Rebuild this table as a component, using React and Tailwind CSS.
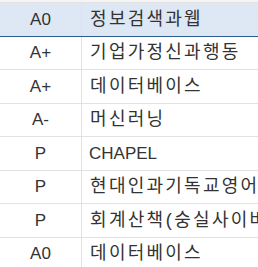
function Ko({ text }) {
  return (
    <span className="shrink-0 whitespace-nowrap">
      {Array.from(text).map((c, i) =>
        /[\uac00-\ud7a3]/.test(c) ? (
          <span key={i} className="inline-block w-[18.8px] text-center">{c}</span>
        ) : (
          <span key={i} className="inline-block w-[9px] text-center">{c}</span>
        )
      )}
    </span>
  );
}

export default function App() {
  const rows = [
    ["A0", "정보검색과웹", true],
    ["A+", "기업가정신과행동", true],
    ["A+", "데이터베이스", true],
    ["A-", "머신러닝", true],
    ["P", "CHAPEL", false],
    ["P", "현대인과기독교영어", true],
    ["P", "회계산책(숭실사이버대)", true],
    ["A0", "데이터베이스", true],
  ];
  return (
    <div className="w-[258px] h-[267px] overflow-hidden bg-white text-[#333] text-[17px]" style={{ fontFamily: '"Liberation Sans", "Noto Sans CJK KR", sans-serif' }}>
      <div className="h-[2px] bg-[#f4f4f4]" />
      {rows.map(([g, n, ko], i) => (
        <div
          key={i}
          className={
            "flex h-[33.5px] border-t " +
            (i === 0 ? "bg-[#dde8f4] border-[#e2e2e2]" : "border-[#e2e2e2]") +
            (i === 1 ? " !border-t-[#2d5b8c]" : "")
          }
        >
          <div className="w-[82px] shrink-0 border-r border-[#e2e2e2] flex items-center justify-center">{g}</div>
          <div className={"flex-1 min-w-0 flex items-center pl-[7px] whitespace-nowrap overflow-hidden " + (ko ? "text-[18px]" : "")}>
            {ko ? <Ko text={n} /> : n}
          </div>
        </div>
      ))}
    </div>
  );
}
